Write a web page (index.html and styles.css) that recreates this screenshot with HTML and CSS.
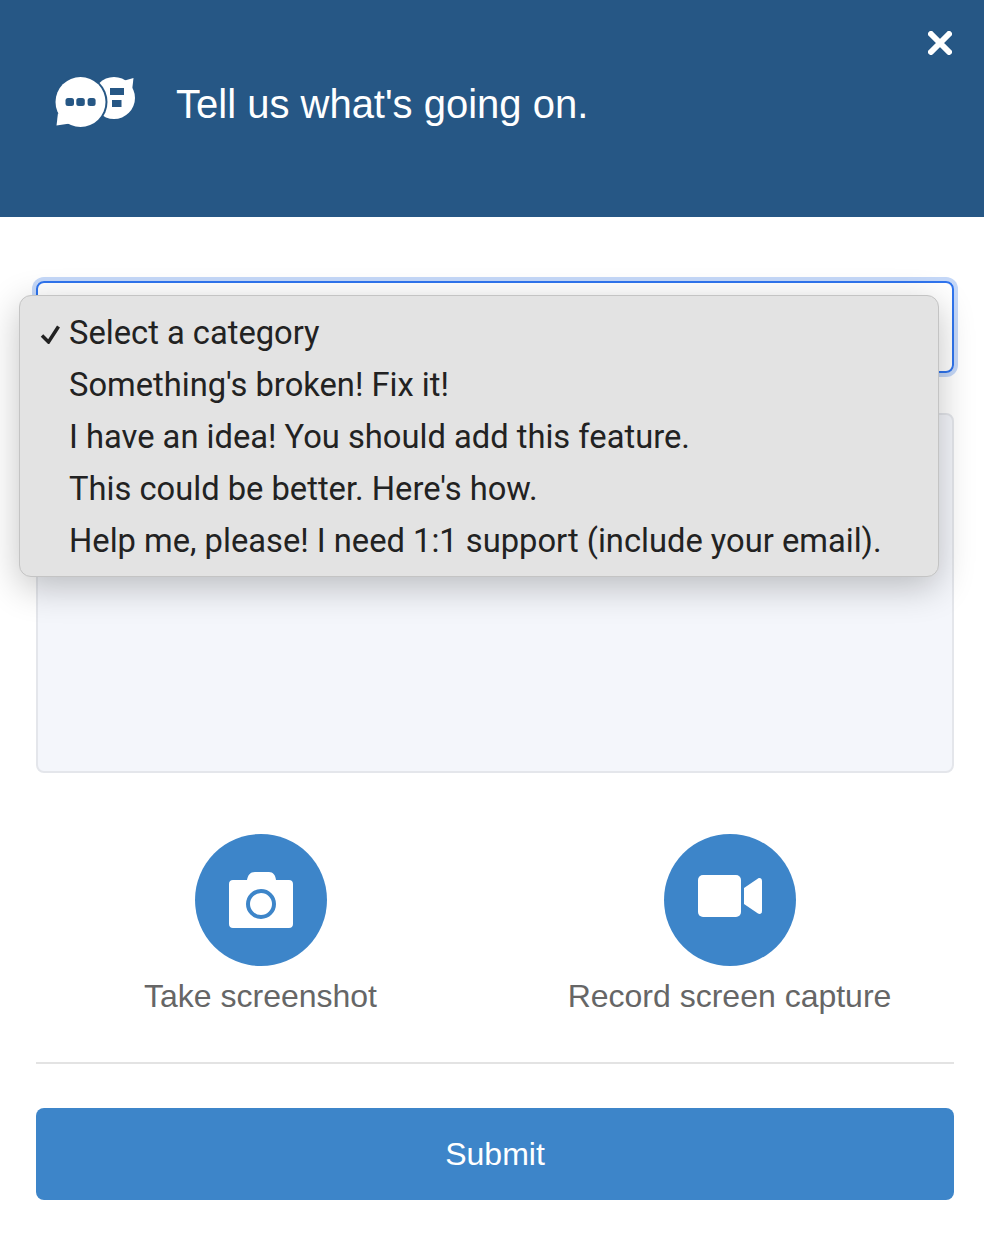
FILE: index.html
```html
<!DOCTYPE html>
<html lang="en">
<head>
    <meta charset="UTF-8">
    <meta name="viewport" content="width=device-width, initial-scale=1.0">
    <title>Tell us what's going on</title>
    <link rel="stylesheet" href="styles.css">
</head>
<body>
    <header class="header">
        <svg class="logo" viewBox="0 0 80 50" width="80" height="50">
            <path class="logo-fill" d="M68 4 L78.500 1 L77 14 Z"/>
            <circle class="logo-fill" cx="59" cy="21" r="21"/>
            <rect class="logo-cut" x="55" y="11" width="14" height="7"/>
            <rect class="logo-cut" x="57" y="23" width="9.500" height="7"/>
            <circle class="logo-ring" cx="25.500" cy="25" r="27"/>
            <circle class="logo-fill" cx="25.500" cy="25" r="25"/>
            <path class="logo-fill" d="M3 36 L1.500 48.500 L15 46.500 Z"/>
            <rect class="logo-cut" x="10.500" y="21" width="8.500" height="8" rx="2.500"/>
            <rect class="logo-cut" x="21.300" y="21" width="8.500" height="8" rx="2.500"/>
            <rect class="logo-cut" x="32.600" y="21" width="8" height="8" rx="2.500"/>
        </svg>
        <h1 class="title">Tell us what's going on.</h1>
        <button class="close" type="button" aria-label="Close">
            <svg viewBox="0 0 24 24" width="24" height="24">
                <path d="M3 3 L21 21 M21 3 L3 21"/>
            </svg>
        </button>
    </header>

    <main class="content">
        <div class="select"></div>
        <textarea class="message"></textarea>

        <div class="actions">
            <div class="action">
                <div class="action-icon">
                    <svg viewBox="0 0 64 56" width="64" height="56">
                        <path class="icon-fill" d="M18 8 C19 3 21 0 26 0 H40 C44 0 46.500 3 47 8 H60 C62.500 8 64 9.500 64 12 V52 C64 54.500 62.500 56 60 56 H4 C1.500 56 0 54.500 0 52 V12 C0 9.500 1.500 8 4 8 Z"/>
                        <circle class="icon-ring" cx="32" cy="32" r="13"/>
                    </svg>
                </div>
                <span class="action-label">Take screenshot</span>
            </div>
            <div class="action">
                <div class="action-icon">
                    <svg class="video" viewBox="0 0 64 42" width="64" height="42">
                        <rect class="icon-fill" x="0" y="0" width="43" height="42" rx="5"/>
                        <path class="icon-fill" d="M46 13 L60 3.500 C62 2.500 64 3.500 64 6 V36 C64 38.500 62 39.500 60 38.500 L46 29 Z"/>
                    </svg>
                </div>
                <span class="action-label">Record screen capture</span>
            </div>
        </div>

        <hr class="divider">
        <button class="submit" type="button">Submit</button>
    </main>

    <ul class="menu">
        <li class="menu-item">
            <svg class="check" viewBox="0 0 20 20" width="20" height="20">
                <path d="M2 11.500 L8.500 18 L18.500 2.500"/>
            </svg>
            Select a category
        </li>
        <li class="menu-item">Something's broken! Fix it!</li>
        <li class="menu-item">I have an idea! You should add this feature.</li>
        <li class="menu-item">This could be better. Here's how.</li>
        <li class="menu-item">Help me, please! I need 1:1 support (include your email).</li>
    </ul>
</body>
</html>
```

FILE: styles.css
```css
* {
    box-sizing: border-box;
}

body {
    margin: 0;
    background: #fff;
    font-family: "Liberation Sans", Arial, sans-serif;
}

.header {
    position: relative;
    display: flex;
    align-items: flex-start;
    height: 217px;
    padding: 77px 0 0 55px;
    background: #265785;
}

.logo-fill {
    fill: #fff;
}

.logo-cut {
    fill: #265785;
}

.logo-ring {
    fill: #265785;
}

.title {
    margin: 0 0 0 41px;
    color: #fff;
    font-size: 40px;
    font-weight: 400;
    line-height: 54px;
}

.close {
    position: absolute;
    top: 31px;
    left: 928px;
    width: 24px;
    height: 24px;
    padding: 0;
    border: none;
    background: none;
}

.close svg {
    display: block;
}

.close path {
    fill: none;
    stroke: #fff;
    stroke-width: 6;
    stroke-linecap: round;
}

.content {
    display: flex;
    flex-direction: column;
    padding: 64px 30px 54px 36px;
}

.select {
    height: 92px;
    border: 2px solid #2f74ee;
    border-radius: 8px;
    box-shadow: 0 0 0 4px #c5d8f8;
}

.message {
    display: block;
    height: 360px;
    margin-top: 40px;
    border: 2px solid #e4e6eb;
    border-radius: 8px;
    background: #f4f6fb;
    resize: none;
}

.actions {
    display: grid;
    grid-template-columns: 1fr 1fr;
    margin: 61px -10px 0;
}

.action {
    display: flex;
    flex-direction: column;
    align-items: center;
}

.action-icon {
    display: flex;
    justify-content: center;
    align-items: center;
    width: 132px;
    height: 132px;
    border-radius: 50%;
    background: #3d85c9;
}

.video {
    margin-bottom: 8px;
}

.icon-fill {
    fill: #fff;
}

.icon-ring {
    fill: #fff;
    stroke: #3d85c9;
    stroke-width: 4;
}

.action-label {
    margin-top: 10px;
    color: #666;
    font-size: 32px;
    line-height: 40px;
}

.divider {
    width: 100%;
    height: 2px;
    margin: 46px 0 0;
    border: none;
    background: #e3e3e3;
}

.submit {
    height: 92px;
    margin-top: 44px;
    border: none;
    border-radius: 8px;
    background: #3d85c9;
    color: #fff;
    font-family: inherit;
    font-size: 32px;
}

/* native dropdown, open on top of the form */
.menu {
    position: absolute;
    top: 295px;
    left: 19px;
    width: 920px;
    margin: 0;
    padding: 11px 0 9px;
    border: 1px solid #c4c4c4;
    border-radius: 12px;
    background: #e3e3e3;
    box-shadow: 0 10px 36px rgba(0, 0, 0, 0.24);
    font-family: Roboto, "Liberation Sans", sans-serif;
    list-style: none;
}

.menu-item {
    position: relative;
    height: 52px;
    padding-left: 49px;
    color: #222;
    font-size: 32.700px;
    line-height: 52px;
}

.check {
    position: absolute;
    top: 17px;
    left: 20px;
}

.check path {
    fill: none;
    stroke: #222;
    stroke-width: 3.500;
}
```
